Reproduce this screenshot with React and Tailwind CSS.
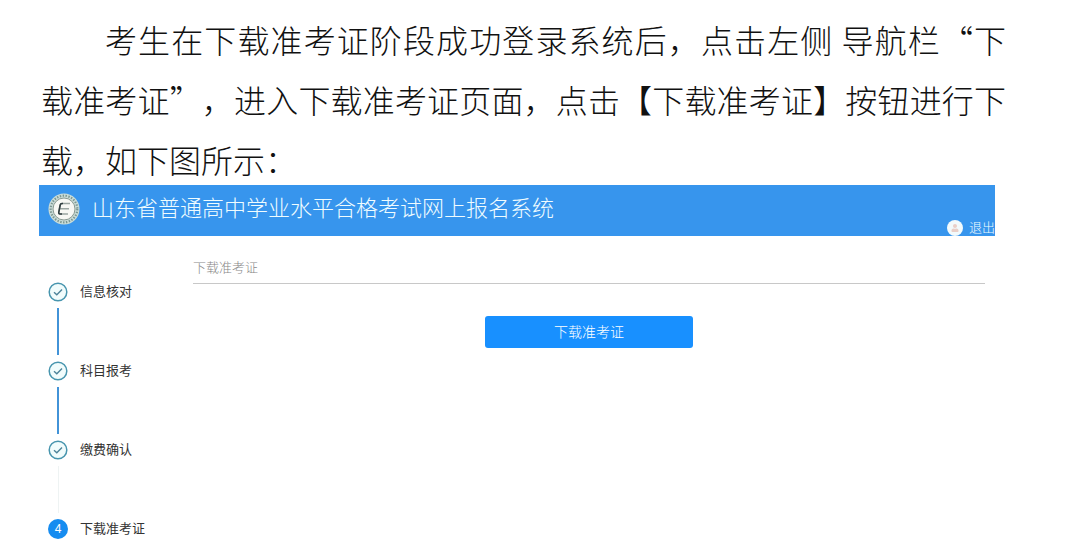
import { FaUser } from "react-icons/fa";

const steps = [
  { id: 1, label: "信息核对", status: "done" },
  { id: 2, label: "科目报考", status: "done" },
  { id: 3, label: "缴费确认", status: "done" },
  { id: 4, label: "下载准考证", status: "current" },
];

function Logo() {
  return (
    <svg viewBox="0 0 32 32" className="size-8 shrink-0" aria-hidden="true">
      <circle cx="16" cy="16" r="15.5" fill="#c9dcd8" />
      <circle cx="16" cy="16" r="13.3" fill="none" stroke="#7b9690" strokeWidth="2.2" strokeDasharray="1.4 1.5" />
      <circle cx="16" cy="16" r="11" fill="#f7f8f4" stroke="#899991" strokeWidth="1" />
      <path d="M22 10.5H14Q12.5 10.5 12.2 12L10.8 19.2Q10.5 21 12 21H20M12.2 15.7H21" fill="none" stroke="#9aa5a1" strokeWidth="1.5" />
      <path d="M15 10.5H14Q12.5 10.5 12.2 12L10.8 19.2Q10.5 21 12 21H14" fill="none" stroke="#303e40" strokeWidth="1.6" />
    </svg>
  );
}

function StepIcon({ step }) {
  if (step.status === "current") {
    return (
      <span className="flex size-5 items-center justify-center rounded-full bg-[#168cf0] text-xs text-white">
        {step.id}
      </span>
    );
  }

  return (
    <svg viewBox="0 0 20 20" className="size-5" fill="none" aria-hidden="true">
      <circle cx="10" cy="10" r="8.8" fill="#f1fcfc" stroke="#4795ae" strokeWidth="1.5" />
      <path d="M6 10.2L8.8 12.7L14 7.6" stroke="#4d8399" strokeWidth="1.4" />
    </svg>
  );
}

export default function App() {
  return (
    <div
      lang="zh-CN"
      className="bg-white pt-[9px] font-['Liberation_Sans','Noto_Sans_CJK_SC',sans-serif] text-[13px] leading-5 text-[#333]"
    >
      {/* Instructions */}
      <p className="mr-[74px] ml-[41px] text-justify indent-[2em] font-['Noto_Sans_CJK_SC',sans-serif] text-[32px] leading-[60px] font-light text-[#111] [text-spacing-trim:space-all]">
        考生在下载准考证阶段成功登录系统后，点击左侧 导航栏“下载准考证”，进入下载准考证页面，点击【下载准考证】按钮进行下载，如下图所示：
      </p>

      <div className="mr-[85px] ml-[39px] -mt-1">
        {/* Header */}
        <header className="flex h-[51px] justify-between bg-[#3795ed] pl-[9px] text-[#effcff]">
          <div className="flex items-center gap-3 pb-1">
            <Logo />
            <h1 className="text-[22px] font-light">山东省普通高中学业水平合格考试网上报名系统</h1>
          </div>
          <div className="flex items-center gap-1.5 self-end">
            <span className="flex size-4 items-center justify-center rounded-full bg-[#f2fafc]">
              <FaUser className="size-2 text-[#e9cfc8]" />
            </span>
            <a href="#logout" className="leading-4 font-light">
              退出
            </a>
          </div>
        </header>

        <div className="flex">
          {/* Step navigation */}
          <nav className="w-[154px] shrink-0 pt-[46px] pl-[9px]">
            <ol>
              {steps.map((step, index) => (
                <li key={step.id} className="flex gap-3">
                  <div className="flex flex-col items-center">
                    <StepIcon step={step} />
                    {index < 2 && <span className="my-1.5 h-[47px] w-0.5 bg-[#4293d8]" />}
                    {index === 2 && <span className="my-1.5 h-[47px] w-px bg-[#eef3f3]" />}
                  </div>
                  <span>{step.label}</span>
                </li>
              ))}
            </ol>
          </nav>

          {/* Ticket download */}
          <main className="mr-2.5 flex-1 pt-[22px]">
            <h2 className="border-b border-[#c8c8c8] pb-[5px] font-light text-[#888]">下载准考证</h2>
            <div className="mt-8 flex justify-center">
              <button type="button" className="h-8 w-52 rounded-[3px] bg-[#1890ff] text-sm font-light text-white">
                下载准考证
              </button>
            </div>
          </main>
        </div>
      </div>
    </div>
  );
}
